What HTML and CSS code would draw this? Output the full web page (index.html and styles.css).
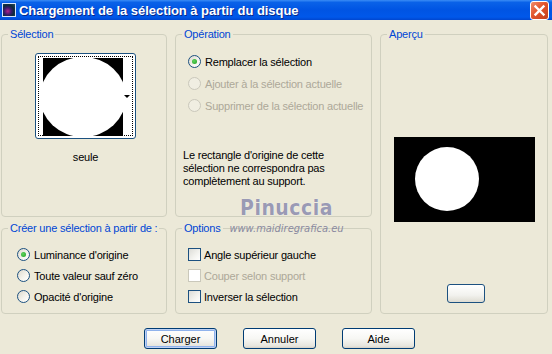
FILE: index.html
```html
<!DOCTYPE html>
<html>
<head>
  <link rel="stylesheet" href="styles.css">
</head>
<body>
  <div class="window">
    <div class="titlebar">
      <span class="app-icon"></span>
      <span class="title">Chargement de la sélection à partir du disque</span>
      <span class="close-btn">
        <svg width="13" height="13" viewBox="0 0 13 13"><path d="M2.5 2.5 L10.5 10.5 M10.5 2.5 L2.5 10.5" stroke="#fff" stroke-width="2.4" stroke-linecap="square"/></svg>
      </span>
    </div>

    <div class="content">
      <fieldset class="group group-selection">
        <legend>Sélection</legend>
        <div class="thumb">
          <div class="thumb-focus">
            <div class="thumb-image"><div class="disc"></div></div>
            <span class="thumb-arrow"></span>
          </div>
        </div>
        <div class="thumb-name">seule</div>
      </fieldset>

      <fieldset class="group group-operation">
        <legend>Opération</legend>
        <div class="choices">
          <div class="choice"><span class="radio checked"></span>Remplacer la sélection</div>
          <div class="choice disabled"><span class="radio"></span>Ajouter à la sélection actuelle</div>
          <div class="choice disabled"><span class="radio"></span>Supprimer de la sélection actuelle</div>
        </div>
        <p class="note">Le rectangle d'origine de cette sélection ne correspondra pas complètement au support.</p>
      </fieldset>

      <fieldset class="group group-preview">
        <legend>Aperçu</legend>
        <div class="preview"><div class="preview-disc"></div></div>
        <button class="small-btn"></button>
      </fieldset>

      <fieldset class="group group-source">
        <legend>Créer une sélection à partir de :</legend>
        <div class="choices tight">
          <div class="choice"><span class="radio checked"></span>Luminance d'origine</div>
          <div class="choice"><span class="radio"></span>Toute valeur sauf zéro</div>
          <div class="choice"><span class="radio"></span>Opacité d'origine</div>
        </div>
      </fieldset>

      <fieldset class="group group-options">
        <legend>Options</legend>
        <div class="choices tight">
          <div class="choice"><span class="check"></span>Angle supérieur gauche</div>
          <div class="choice disabled"><span class="check"></span>Couper selon support</div>
          <div class="choice"><span class="check"></span>Inverser la sélection</div>
        </div>
      </fieldset>
    </div>

    <div class="buttons">
      <button class="btn default">Charger</button>
      <button class="btn">Annuler</button>
      <button class="btn">Aide</button>
    </div>

    <div class="watermark">
      <span class="wm-name">Pinuccia</span>
      <span class="wm-url">www.maidiregrafica.eu</span>
    </div>
  </div>
</body>
</html>
```

FILE: styles.css
```css
body {
  margin: 0;
  font-family: "Liberation Sans", Arial, sans-serif;
  font-size: 11px;
  letter-spacing: -0.2px;
  color: #000;
  background: #ece9d8;
}

.window {
  position: relative;
  width: 552px;
  height: 354px;
  background: #ece9d8;
  overflow: hidden;
}

.titlebar {
  height: 20px;
  display: flex;
  align-items: center;
  background: linear-gradient(to bottom, #3b8cf5 0, #0a62e8 12%, #0054e3 50%, #0058ea 85%, #0046cf 100%);
  padding-left: 2px;
}

.app-icon {
  width: 12px;
  height: 12px;
  margin-right: 3px;
  border: 1px solid #d8e4f8;
  background: radial-gradient(circle at 40% 60%, #b0208c 0, #3a1a6a 35%, #0c2a3a 60%, #2a4a5a 100%);
}

.title {
  color: #fff;
  font-weight: bold;
  font-size: 13px;
  letter-spacing: -0.05px;
  text-shadow: 1px 1px 0 #0a2a8a;
  flex: 1;
}

.close-btn {
  width: 19px;
  height: 19px;
  margin-right: 3px;
  box-sizing: border-box;
  border: 1px solid #fff;
  border-radius: 3px;
  background: linear-gradient(135deg, #f08d6c 0, #e2542c 45%, #c4411f 100%);
  display: flex;
  align-items: center;
  justify-content: center;
}

.content {
  display: grid;
  grid-template-columns: 166px 197px 168px;
  grid-template-rows: 189px 92px;
  column-gap: 8px;
  row-gap: 5px;
  padding: 8px 0 0 1px;
}

.group {
  margin: 0;
  padding: 0;
  min-width: 0;
  border: 1px solid #d0d0bf;
  border-radius: 4px;
}

.group legend {
  margin-left: 6px;
  padding: 0 2px;
  color: #0046d5;
  line-height: 13px;
  white-space: nowrap;
}

.group-preview {
  grid-row: 1 / 3;
  grid-column: 3;
}

/* selection thumbnail */
.thumb {
  width: 101px;
  height: 86px;
  box-sizing: border-box;
  margin: 12px 0 0 33px;
  border: 1px solid #1c5180;
  border-radius: 3px;
  background: #fff;
  padding: 2px;
}

.thumb-focus {
  position: relative;
  height: 100%;
  box-sizing: border-box;
  border: 1px dotted #000;
  padding: 1px 0 0 4px;
}

.thumb-image {
  width: 80px;
  height: 78px;
  background: #000;
  position: relative;
  overflow: hidden;
}

.disc {
  position: absolute;
  left: -3px;
  top: -1px;
  width: 86px;
  height: 80px;
  border-radius: 50%;
  background: #fff;
}

.thumb-arrow {
  position: absolute;
  right: 2px;
  top: 38px;
  border-left: 3px solid transparent;
  border-right: 3px solid transparent;
  border-top: 3px solid #000;
}

.thumb-name {
  margin-top: 12px;
  text-align: center;
  padding-left: 3px;
  line-height: 13px;
}

/* radios and checkboxes */
.choices {
  display: flex;
  flex-direction: column;
  gap: 7px;
  padding: 13px 0 0 12px;
}

.choices.tight {
  gap: 6px;
  padding-top: 12px;
}

.group-source .choices {
  padding-left: 15px;
}

.choice {
  display: flex;
  align-items: center;
  height: 15px;
  white-space: nowrap;
}

.choice.disabled {
  color: #aca899;
}

.radio {
  width: 13px;
  height: 13px;
  box-sizing: border-box;
  margin-right: 4px;
  border: 1px solid #1c5180;
  border-radius: 50%;
  background: linear-gradient(135deg, #dcd9cd 0, #f6f5ef 60%, #fff 100%);
  display: flex;
  align-items: center;
  justify-content: center;
}

.radio.checked::after {
  content: "";
  width: 5px;
  height: 5px;
  border-radius: 50%;
  background: radial-gradient(circle at 40% 40%, #5ed35e, #21a121);
}

.disabled .radio {
  border-color: #cac8bb;
  background: #f0eee2;
}

.check {
  width: 13px;
  height: 13px;
  box-sizing: border-box;
  margin-right: 3px;
  border: 1px solid #1c5180;
  background: linear-gradient(135deg, #dcdcd7 0, #f4f4f0 60%, #fff 100%);
}

.disabled .check {
  border-color: #cac8bb;
  background: #fff;
}

.note {
  margin: 36px 0 0 7px;
  width: 160px;
  line-height: 13px;
}

/* preview */
.preview {
  position: relative;
  width: 141px;
  height: 85px;
  margin: 96px 0 0 13px;
  background: #000;
}

.preview-disc {
  position: absolute;
  left: 21px;
  top: 10px;
  width: 64px;
  height: 64px;
  border-radius: 50%;
  background: #fff;
}

.small-btn {
  display: block;
  width: 38px;
  height: 19px;
  margin: 62px 0 0 66px;
  border: 1px solid #1c5180;
  border-radius: 3px;
  background: linear-gradient(to bottom, #fff 0, #f2f2ee 60%, #dedcd2 100%);
}

/* dialog buttons */
.buttons {
  display: flex;
  gap: 26px;
  padding: 14px 0 0 144px;
}

.btn {
  width: 73px;
  height: 21px;
  padding: 0;
  font-family: "Liberation Sans", Arial, sans-serif;
  font-size: 11px;
  color: #000;
  border: 1px solid #003c74;
  border-radius: 3px;
  background: linear-gradient(to bottom, #fff 0, #f7f7f4 50%, #e6e5dd 90%, #d6d0c5 100%);
}

.btn.default {
  box-shadow: inset 0 0 0 1px #c0d2f4, inset 0 0 0 2px #8fb2ec;
}

/* watermark overlay */
.watermark {
  position: absolute;
  left: 224px;
  top: 196px;
  width: 125px;
  text-align: center;
  pointer-events: none;
}

.wm-name {
  display: block;
  font-family: "DejaVu Sans Condensed", "DejaVu Sans", sans-serif;
  font-size: 21px;
  font-weight: bold;
  letter-spacing: 0.5px;
  line-height: 24px;
  color: #9a9ab4;
  text-shadow: 0 0 1px #fff;
}

.wm-url {
  display: block;
  margin-top: 2px;
  font-family: "DejaVu Sans Condensed", "DejaVu Sans", sans-serif;
  font-style: italic;
  font-size: 11px;
  letter-spacing: 0;
  color: #8a8aa0;
}
```
